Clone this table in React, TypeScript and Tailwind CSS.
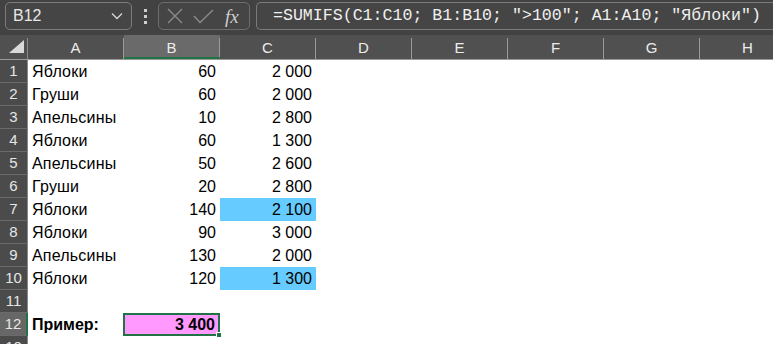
import React from 'react';

const cols = ['A', 'B', 'C', 'D', 'E', 'F', 'G', 'H'];

type Row = { a: string; b: string; c: string; blue?: boolean };

const rows: Row[] = [
  { a: 'Яблоки', b: '60', c: '2 000' },
  { a: 'Груши', b: '60', c: '2 000' },
  { a: 'Апельсины', b: '10', c: '2 800' },
  { a: 'Яблоки', b: '60', c: '1 300' },
  { a: 'Апельсины', b: '50', c: '2 600' },
  { a: 'Груши', b: '20', c: '2 800' },
  { a: 'Яблоки', b: '140', c: '2 100', blue: true },
  { a: 'Яблоки', b: '90', c: '3 000' },
  { a: 'Апельсины', b: '130', c: '2 000' },
  { a: 'Яблоки', b: '120', c: '1 300', blue: true },
];

const font = { fontFamily: '"Liberation Sans", Arial, sans-serif' };

const RowHead = ({ n, active }: { n: number; active?: boolean }) => (
  <div
    className={`h-[23px] flex items-center justify-center border-b border-[#6a6a6a] border-r text-[15px] text-[#e6e6e6] ${
      active ? 'bg-[#676767] border-r-2 border-r-[#217346]' : 'bg-[#4b4b4b] border-r-[#8a8a8a]'
    }`}
  >
    {n}
  </div>
);

const FormulaBar = () => (
  <div className="h-[35px] bg-[#424242] flex items-start pt-[2px] pl-[5px]">
    {/* name box */}
    <div className="w-[127px] h-[28px] rounded-[5px] border border-[#7c7c7c] bg-[#454545] flex items-center justify-between pl-[7px] pr-[8px]">
      <span className="text-[16px] text-[#e8e8e8]" style={font}>B12</span>
      <svg width="12" height="8" viewBox="0 0 12 8">
        <path d="M1 1.5 L6 6.5 L11 1.5" fill="none" stroke="#d8d8d8" strokeWidth="1.3" />
      </svg>
    </div>
    {/* dots */}
    <div className="w-[26px] h-[28px] flex flex-col items-center justify-center gap-[3px]">
      <div className="w-[3px] h-[3px] bg-[#cfcfcf]" />
      <div className="w-[3px] h-[3px] bg-[#cfcfcf]" />
      <div className="w-[3px] h-[3px] bg-[#cfcfcf]" />
    </div>
    {/* cancel / enter / fx */}
    <div className="w-[92px] h-[28px] rounded-[5px] border border-[#6c6c6c] bg-[#454545] flex items-center pl-[8px] gap-[10px]">
      <svg width="16" height="16" viewBox="0 0 16 16">
        <path d="M1 1 L15 15 M15 1 L1 15" stroke="#8c8c8c" strokeWidth="1.3" />
      </svg>
      <svg width="21" height="15" viewBox="0 0 21 15">
        <path d="M1 7 L7 13.5 L20 1" fill="none" stroke="#8c8c8c" strokeWidth="1.3" />
      </svg>
      <span
        className="text-[19px] italic text-[#cfcfcf] leading-none ml-[1px]"
        style={{ fontFamily: '"Liberation Serif", "DejaVu Serif", serif' }}
      >
        fx
      </span>
    </div>
    {/* formula */}
    <div className="ml-[6px] flex-1 h-[28px] rounded-l-[5px] border border-r-0 border-[#7c7c7c] bg-[#454545] flex items-center pl-[16px] whitespace-nowrap overflow-hidden">
      <span
        className="text-[16.6px] text-[#f0f0f0]"
        style={{ fontFamily: '"Liberation Mono", "DejaVu Sans Mono", monospace' }}
      >
        =SUMIFS(C1:C10; B1:B10; "&gt;100"; A1:A10; "Яблоки")
      </span>
    </div>
  </div>
);

export default function App() {
  return (
    <div className="w-[773px] h-[344px] overflow-hidden bg-white" style={font}>
      <FormulaBar />
      {/* column header */}
      <div className="h-[25px] bg-[#505050] flex border-b border-[#9a9a9a] w-[796px]">
        <div className="w-[28px] shrink-0 flex items-end justify-end pr-[3px] pb-[6px] border-r border-[#8a8a8a] mt-[3px]">
          <svg width="15" height="13" viewBox="0 0 15 13">
            <path d="M15 0 L15 13 L0 13 Z" fill="#d9d9d9" />
          </svg>
        </div>
        {cols.map((c) => (
          <div
            key={c}
            className={`w-[96px] shrink-0 flex items-center justify-center text-[15px] text-[#ececec] ${
              c === 'B' ? 'bg-[#6a6a6a] border-b-2 border-[#217346]' : ''
            }`}
          >
            <div className={`flex-1 text-center pt-[3px] ${c === 'B' ? 'pt-[5px]' : ''}`}>{c}</div>
            <div className="w-px self-stretch mt-[3px] bg-[#9a9a9a]" />
          </div>
        ))}
      </div>
      {/* body */}
      <div className="flex w-[796px]">
        <div className="w-[28px] shrink-0 flex flex-col">
          {Array.from({ length: 13 }, (_, i) => (
            <RowHead key={i} n={i + 1} active={i === 11} />
          ))}
        </div>
        <div className="flex flex-col text-[16px] text-black">
          {rows.map((r, i) => (
            <div key={i} className="h-[23px] flex items-center">
              <div className="w-[96px] pl-[4px] tracking-[0.2px]">{r.a}</div>
              <div className="w-[96px] text-right pr-[4px]">{r.b}</div>
              <div
                className={`w-[96px] h-[23px] flex items-center justify-end pr-[4px] ${
                  r.blue ? 'bg-[#66ccff]' : ''
                }`}
              >
                {r.c}
              </div>
            </div>
          ))}
          <div className="h-[23px]" />
          <div className="h-[23px] flex items-center">
            <div className="w-[96px] pl-[4px] font-bold">Пример:</div>
            <div className="relative w-[97px] h-[23px] -ml-px border-2 border-[#217346] bg-[#ff99ff] flex items-center justify-end pr-[3px] font-bold">
              3 400
              <div className="absolute -right-[4px] -bottom-[4px] w-[6px] h-[6px] bg-[#217346] border border-white" />
            </div>
          </div>
          <div className="h-[23px]" />
        </div>
      </div>
    </div>
  );
}
